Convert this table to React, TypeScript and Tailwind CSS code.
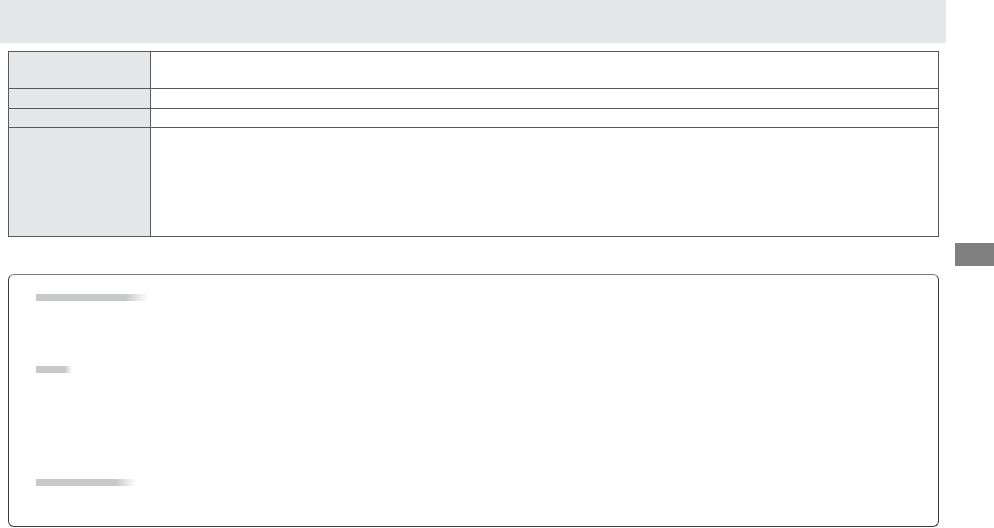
import React from 'react';

const FadeBar: React.FC<{ width: string; className?: string }> = ({ width, className }) => (
  <div className={`h-[7px] bg-linear-to-r from-[#c8c9cb] from-80% to-white ${width} ${className ?? ''}`} />
);

export default function App() {
  return (
    <div className="w-[994px] h-[528px] bg-white overflow-hidden font-['Liberation_Sans',sans-serif]">
      {/* Title band */}
      <div className="h-[43px] w-[946px] bg-[#e6e7e8]" />

      <div className="flex">
        <div className="pl-2 w-[939px]">
          {/* Spec table */}
          <div className="mt-2 border border-[#58595b] flex flex-col">
            <div className="flex h-[37px] border-b border-[#58595b]">
              <div className="w-[142px] border-r border-[#58595b] bg-[#e6e7e8]" />
              <div className="flex-1" />
            </div>
            <div className="flex h-[20px] border-b border-[#58595b]">
              <div className="w-[142px] border-r border-[#58595b] bg-[#e6e7e8]" />
              <div className="flex-1" />
            </div>
            <div className="flex h-[19px] border-b border-[#58595b]">
              <div className="w-[142px] border-r border-[#58595b] bg-[#e6e7e8]" />
              <div className="flex-1" />
            </div>
            <div className="flex h-[108px]">
              <div className="w-[142px] border-r border-[#58595b] bg-[#e6e7e8]" />
              <div className="flex-1" />
            </div>
          </div>

          {/* Notes box */}
          <div className="mt-[37px] h-[253px] border border-[#3a3a3a] border-t-[#7a7a7a] rounded-[6px] pl-[27px] pt-[19px]">
            <FadeBar width="w-[112px]" />
            <FadeBar width="w-[36px]" className="mt-[65px]" />
            <FadeBar width="w-[100px]" className="mt-[106px]" />
          </div>
        </div>

        {/* Side tab */}
        <div className="ml-[16px] mt-[200px] w-[39px] h-[23px] bg-[#808080]" />
      </div>
    </div>
  );
}
